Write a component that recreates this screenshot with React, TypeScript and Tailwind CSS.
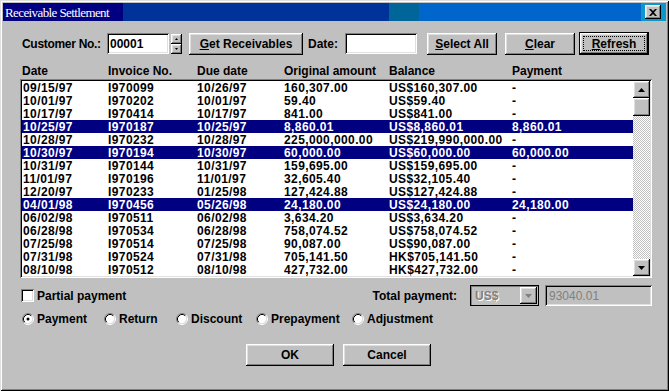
import React from "react";

const raised =
  "shadow-[inset_-1px_-1px_#000,inset_1px_1px_#fff,inset_-2px_-2px_#808080,inset_2px_2px_#dfdfdf]";
const sunken =
  "shadow-[inset_1px_1px_#808080,inset_-1px_-1px_#fff,inset_2px_2px_#000,inset_-2px_-2px_#dfdfdf]";

type Row = [string, string, string, string, string, string, boolean?];

const rows: Row[] = [
  ["09/15/97", "I970099", "10/26/97", "160,307.00", "US$160,307.00", "-"],
  ["10/01/97", "I970202", "10/01/97", "59.40", "US$59.40", "-"],
  ["10/17/97", "I970414", "10/17/97", "841.00", "US$841.00", "-"],
  ["10/25/97", "I970187", "10/25/97", "8,860.01", "US$8,860.01", "8,860.01", true],
  ["10/28/97", "I970232", "10/28/97", "225,000,000.00", "US$219,990,000.00", "-"],
  ["10/30/97", "I970194", "10/30/97", "60,000.00", "US$60,000.00", "60,000.00", true],
  ["10/31/97", "I970144", "10/31/97", "159,695.00", "US$159,695.00", "-"],
  ["11/01/97", "I970196", "11/01/97", "32,605.40", "US$32,105.40", "-"],
  ["12/20/97", "I970233", "01/25/98", "127,424.88", "US$127,424.88", "-"],
  ["04/01/98", "I970456", "05/26/98", "24,180.00", "US$24,180.00", "24,180.00", true],
  ["06/02/98", "I970511", "06/02/98", "3,634.20", "US$3,634.20", "-"],
  ["06/28/98", "I970534", "06/28/98", "758,074.52", "US$758,074.52", "-"],
  ["07/25/98", "I970514", "07/25/98", "90,087.00", "US$90,087.00", "-"],
  ["07/31/98", "I970524", "07/31/98", "705,141.50", "HK$705,141.50", "-"],
  ["08/10/98", "I970512", "08/10/98", "427,732.00", "HK$427,732.00", "-"],
];

const cols = "grid grid-cols-[86px_89px_87px_105px_123px_1fr]";

function Arrow({ dir, color = "#000" }: { dir: "up" | "down"; color?: string }) {
  return (
    <svg width="7" height="4" viewBox="0 0 7 4">
      {dir === "up" ? (
        <polygon points="3.5,0 7,4 0,4" fill={color} />
      ) : (
        <polygon points="0,0 7,0 3.5,4" fill={color} />
      )}
    </svg>
  );
}

function Radio({ checked }: { checked?: boolean }) {
  return (
    <svg width="12" height="12" viewBox="0 0 12 12" className="shrink-0">
      <circle cx="6" cy="6" r="4.5" fill="#fff" />
      <path d="M2.11 9.89 A5.5 5.5 0 0 1 9.89 2.11" stroke="#808080" fill="none" />
      <path d="M9.89 2.11 A5.5 5.5 0 0 1 2.11 9.89" stroke="#fff" fill="none" />
      <path d="M2.82 9.18 A4.5 4.5 0 0 1 9.18 2.82" stroke="#000" fill="none" />
      <path d="M9.18 2.82 A4.5 4.5 0 0 1 2.82 9.18" stroke="#dfdfdf" fill="none" />
      {checked && <circle cx="6" cy="6" r="1.5" fill="#000" />}
    </svg>
  );
}

export default function App() {
  return (
    <div className="w-[669px] h-[391px] bg-[#c0c0c0] p-[3px] flex flex-col text-[12px] font-bold text-black leading-none font-['Liberation_Sans',Arial,sans-serif] shadow-[inset_1px_1px_#dfdfdf,inset_-1px_-1px_#000,inset_2px_2px_#fff,inset_-2px_-2px_#808080]">
      {/* Title bar */}
      <div className="h-[18px] flex items-center pl-[2px] pr-[5px] bg-[linear-gradient(90deg,#000080_120px,#003399_120px_386px,#006699_386px_416px,#0066cc_416px_638px,#0b97cc_638px)]">
        <span className="text-white font-normal text-[13px] tracking-[-0.6px] font-['Liberation_Serif','Times_New_Roman',serif]">
          Receivable Settlement
        </span>
        <div className={`ml-auto w-[16px] h-[14px] bg-[#c0c0c0] flex items-center justify-center ${raised}`}>
          <svg width="8" height="7" viewBox="0 0 8 7">
            <path d="M0 0h2l2 2 2-2h2L5 3.5 8 7H6L4 5 2 7H0l3-3.5z" fill="#000" />
          </svg>
        </div>
      </div>

      {/* Top controls */}
      <div className="mt-[11px] h-[23px] flex items-center">
        <span className="ml-[19px] w-[85px] tracking-[-0.3px]">Customer No.:</span>
        <div className={`w-[62px] h-[21px] bg-white flex items-center pl-[3px] ${sunken}`}>00001</div>
        <div className="ml-[2px] w-[11px] h-[20px] flex flex-col">
          <div className={`h-[10px] flex items-center justify-center ${raised}`}>
            <svg width="3" height="2" viewBox="0 0 3 2"><polygon points="1.5,0 3,2 0,2" fill="#000" /></svg>
          </div>
          <div className={`h-[10px] flex items-center justify-center ${raised}`}>
            <svg width="3" height="2" viewBox="0 0 3 2"><polygon points="0,0 3,0 1.5,2" fill="#000" /></svg>
          </div>
        </div>
        <button className={`ml-[7px] w-[114px] h-[22px] bg-[#c0c0c0] ${raised}`}>
          <u>G</u>et Receivables
        </button>
        <span className="ml-[5px] w-[37px]">Date:</span>
        <div className={`w-[72px] h-[21px] bg-white ${sunken}`} />
        <button className={`ml-[10px] w-[70px] h-[22px] bg-[#c0c0c0] ${raised}`}>
          <u>S</u>elect All
        </button>
        <button className={`ml-[8px] w-[70px] h-[22px] bg-[#c0c0c0] ${raised}`}>
          <u>C</u>lear
        </button>
        <div className="ml-[4px] w-[70px] h-[23px] border border-black">
          <div className={`h-full p-[3px] flex ${raised}`}>
            <div className="flex-1 border border-dotted border-black flex items-center justify-center">
              <span>
                <u>R</u>efresh
              </span>
            </div>
          </div>
        </div>
      </div>

      {/* Column headers */}
      <div className={`mt-[8px] h-[16px] ml-[19px] w-[611px] items-center ${cols}`}>
        <span>Date</span>
        <span>Invoice No.</span>
        <span>Due date</span>
        <span>Original amount</span>
        <span>Balance</span>
        <span>Payment</span>
      </div>

      {/* List */}
      <div className={`ml-[17px] w-[632px] h-[199px] bg-white p-[2px] flex ${sunken}`}>
        <div className="flex-1 flex flex-col tracking-[0.4px]">
          {rows.map((r, i) => (
            <div
              key={i}
              className={`h-[13px] items-center ${cols} ${r[6] ? "bg-[#000080] text-white" : ""}`}
            >
              <span className="pl-[1px]">{r[0]}</span>
              <span>{r[1]}</span>
              <span>{r[2]}</span>
              <span>{r[3]}</span>
              <span>{r[4]}</span>
              <span>{r[5]}</span>
            </div>
          ))}
        </div>
        <div className="w-[17px] flex flex-col">
          <div className={`h-[17px] bg-[#c0c0c0] flex items-center justify-center ${raised}`}>
            <Arrow dir="up" />
          </div>
          <div className={`h-[18px] bg-[#c0c0c0] ${raised}`} />
          <div className="flex-1 bg-[repeating-conic-gradient(#c0c0c0_0_25%,#fff_0_50%)] bg-[length:2px_2px]" />
          <div className={`h-[17px] bg-[#c0c0c0] flex items-center justify-center ${raised}`}>
            <Arrow dir="down" />
          </div>
        </div>
      </div>

      {/* Partial payment / total */}
      <div className="mt-[7px] h-[21px] flex items-center">
        <div className={`ml-[18px] w-[13px] h-[13px] bg-white ${sunken}`} />
        <span className="ml-[3px]">Partial payment</span>
        <span className="ml-auto">Total payment:</span>
        <div className="ml-[13px] w-[69px] h-[21px] border border-black flex items-center shadow-[inset_1px_1px_#808080]">
          <span className="ml-[4px] text-[#808080] [text-shadow:1px_1px_#fff]">US$</span>
          <div className={`ml-auto mr-[1px] w-[17px] h-[17px] bg-[#c0c0c0] flex items-center justify-center ${raised}`}>
            <Arrow dir="down" color="#808080" />
          </div>
        </div>
        <div className={`ml-[6px] mr-[14px] w-[107px] h-[21px] flex items-center pl-[4px] font-normal text-[#808080] ${sunken}`}>
          93040.01
        </div>
      </div>

      {/* Radio options */}
      <div className="mt-[6px] h-[14px] ml-[19px] flex items-center">
        <div className="w-[82px] flex items-center gap-[3px]">
          <Radio checked />
          <span>Payment</span>
        </div>
        <div className="w-[72px] flex items-center gap-[3px]">
          <Radio />
          <span>Return</span>
        </div>
        <div className="w-[80px] flex items-center gap-[3px]">
          <Radio />
          <span>Discount</span>
        </div>
        <div className="w-[96px] flex items-center gap-[3px]">
          <Radio />
          <span>Prepayment</span>
        </div>
        <div className="flex items-center gap-[3px]">
          <Radio />
          <span>Adjustment</span>
        </div>
      </div>

      {/* OK / Cancel */}
      <div className="mt-[18px] h-[22px] ml-[243px] flex gap-[9px]">
        <button className={`w-[88px] h-[22px] bg-[#c0c0c0] ${raised}`}>OK</button>
        <button className={`w-[88px] h-[22px] bg-[#c0c0c0] ${raised}`}>Cancel</button>
      </div>
    </div>
  );
}
